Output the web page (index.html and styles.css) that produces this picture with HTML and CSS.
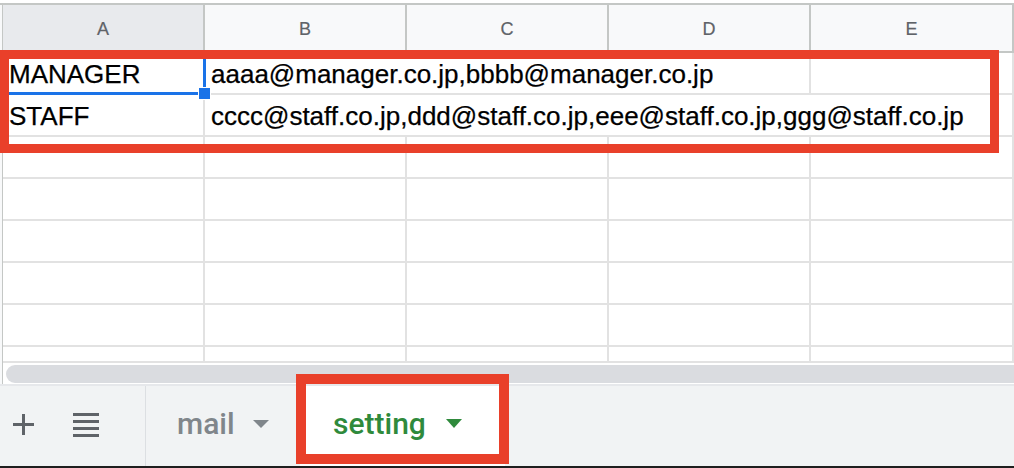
FILE: index.html
```html
<!DOCTYPE html>
<html lang="ja">
<head>
<meta charset="utf-8">
<title>setting</title>
<link rel="stylesheet" href="styles.css">
</head>
<body>
<div class="app">
  <div class="sheet">
    <div class="grid">
      <div class="stub head"></div>
      <div class="hcell sel">A</div>
      <div class="hcell">B</div>
      <div class="hcell">C</div>
      <div class="hcell">D</div>
      <div class="hcell">E</div>

      <div class="stub"></div>
      <div class="cell">MANAGER</div>
      <div class="cell span3">aaaa@manager.co.jp,bbbb@manager.co.jp</div>
      <div class="cell"></div>

      <div class="stub"></div>
      <div class="cell">STAFF</div>
      <div class="cell span4">cccc@staff.co.jp,ddd@staff.co.jp,eee@staff.co.jp,ggg@staff.co.jp</div>

      <div class="stub"></div><div class="cell"></div><div class="cell"></div><div class="cell"></div><div class="cell"></div><div class="cell"></div>
      <div class="stub"></div><div class="cell"></div><div class="cell"></div><div class="cell"></div><div class="cell"></div><div class="cell"></div>
      <div class="stub"></div><div class="cell"></div><div class="cell"></div><div class="cell"></div><div class="cell"></div><div class="cell"></div>
      <div class="stub"></div><div class="cell"></div><div class="cell"></div><div class="cell"></div><div class="cell"></div><div class="cell"></div>
      <div class="stub"></div><div class="cell"></div><div class="cell"></div><div class="cell"></div><div class="cell"></div><div class="cell"></div>
      <div class="stub"></div><div class="cell"></div><div class="cell"></div><div class="cell"></div><div class="cell"></div><div class="cell"></div>
    </div>
    <div class="selection"><span class="handle"></span></div>
    <div class="annot annot-cells"></div>
  </div>

  <div class="hscroll">
    <div class="hstub"></div>
    <div class="thumb"></div>
  </div>

  <div class="tabbar">
    <div class="tools">
      <svg class="icon plus" width="21" height="21" viewBox="0 0 21 21" aria-hidden="true">
        <rect x="0" y="9" width="21" height="3" fill="#5f6368"/>
        <rect x="9" y="0" width="3" height="21" fill="#5f6368"/>
      </svg>
      <svg class="icon menu" width="26" height="24" viewBox="0 0 26 24" aria-hidden="true">
        <rect x="0" y="0" width="26" height="3" fill="#5f6368"/>
        <rect x="0" y="7" width="26" height="3" fill="#5f6368"/>
        <rect x="0" y="14" width="26" height="3" fill="#5f6368"/>
        <rect x="0" y="21" width="26" height="3" fill="#5f6368"/>
      </svg>
    </div>
    <div class="tab">
      <span class="tab-name">mail</span>
      <svg class="caret" width="16" height="8" viewBox="0 0 16 8" aria-hidden="true"><polygon points="0,0 16,0 8,8" fill="#80868b"/></svg>
    </div>
    <div class="tab active">
      <span class="tab-name">setting</span>
      <svg class="caret" width="16" height="9" viewBox="0 0 16 9" aria-hidden="true"><polygon points="0,0 16,0 8,9" fill="#2f8a3c"/></svg>
    </div>
  </div>
  <div class="annot annot-tab"></div>
  <div class="bottom-edge"></div>
</div>
</body>
</html>
```

FILE: styles.css
```css
* { box-sizing: border-box; }

html, body {
  margin: 0;
  padding: 0;
  background: #ffffff;
}

body {
  width: 1014px;
  height: 468px;
  overflow: hidden;
  font-family: "Liberation Sans", Arial, sans-serif;
}

.app {
  position: relative;
  width: 1014px;
  height: 468px;
  overflow: hidden;
}

.sheet {
  position: relative;
}

.grid {
  display: grid;
  grid-template-columns: 3px repeat(4, 202px) 1fr;
  grid-template-rows: 50px repeat(7, 42px) 16px;
  padding-top: 3px;
}

.stub {
  background: #f8f9fa;
  border-right: 1px solid #c4c7c5;
}

.stub.head {
  border-top: 2px solid #c4c7c5;
  border-bottom: 2px solid #c4c7c5;
}

.hcell {
  display: flex;
  align-items: center;
  justify-content: center;
  padding-top: 3px;
  background: #f8f9fa;
  border-top: 2px solid #c4c7c5;
  border-bottom: 2px solid #c4c7c5;
  border-right: 2px solid #c4c7c5;
  color: #5f6368;
  font-size: 18px;
  -webkit-text-stroke: 0.2px #5f6368;
}

.hcell.sel {
  background: #e8eaed;
}

.cell {
  border-right: 2px solid #e2e2e2;
  border-bottom: 2px solid #e2e2e2;
  padding: 3px 0 0 6px;
  font-size: 26px;
  line-height: 36px;
  color: #000000;
  white-space: nowrap;
  overflow: hidden;
  -webkit-text-stroke: 0.25px #000000;
}

.cell.span3 { grid-column: span 3; }
.cell.span4 { grid-column: span 4; }

.selection {
  position: absolute;
  left: 2px;
  top: 51px;
  width: 204px;
  height: 44px;
  border: 3px solid #1a73e8;
  pointer-events: none;
}

.handle {
  position: absolute;
  right: -8px;
  bottom: -8px;
  width: 13px;
  height: 13px;
  background: #1a73e8;
  border: 1px solid #ffffff;
}

.annot {
  position: absolute;
  border-style: solid;
  border-color: #e9402a;
  pointer-events: none;
}

.annot-cells {
  left: 0;
  top: 50px;
  width: 999px;
  height: 103px;
  border-width: 9px;
}

.annot-tab {
  left: 296px;
  top: 374px;
  width: 213px;
  height: 90px;
  border-width: 10px;
}

.hscroll {
  display: flex;
  height: 21px;
  background: #ffffff;
}

.hstub {
  width: 3px;
  background: #f8f9fa;
  border-right: 1px solid #c4c7c5;
}

.thumb {
  flex: 1;
  margin: 2px -12px 1px 3px;
  background: #dadce0;
  border-radius: 9px;
}

.tabbar {
  display: flex;
  height: 82px;
  background: #f1f3f4;
  border-top: 2px solid #e6e8eb;
  font-family: Roboto, "Liberation Sans", Arial, sans-serif;
  font-weight: 500;
}

.tools {
  display: flex;
  align-items: center;
  gap: 39px;
  width: 146px;
  padding: 0 0 3px 13px;
  border-right: 1px solid #dcdfe2;
}

.icon { display: block; }

.tab {
  display: flex;
  align-items: center;
  padding-bottom: 5px;
  font-size: 30px;
}

.tab-name {
  line-height: 35px;
}

.tab .tab-name { color: #80868b; }

.tab:not(.active) {
  width: 154px;
  padding-left: 31px;
  gap: 18px;
}

.tab.active {
  width: 205px;
  padding-left: 33px;
  gap: 20px;
  background: #ffffff;
}

.tab.active .tab-name { color: #2f8a3c; }

.caret { display: block; }

.bottom-edge {
  height: 2px;
  background: #1e1e1e;
}
```
